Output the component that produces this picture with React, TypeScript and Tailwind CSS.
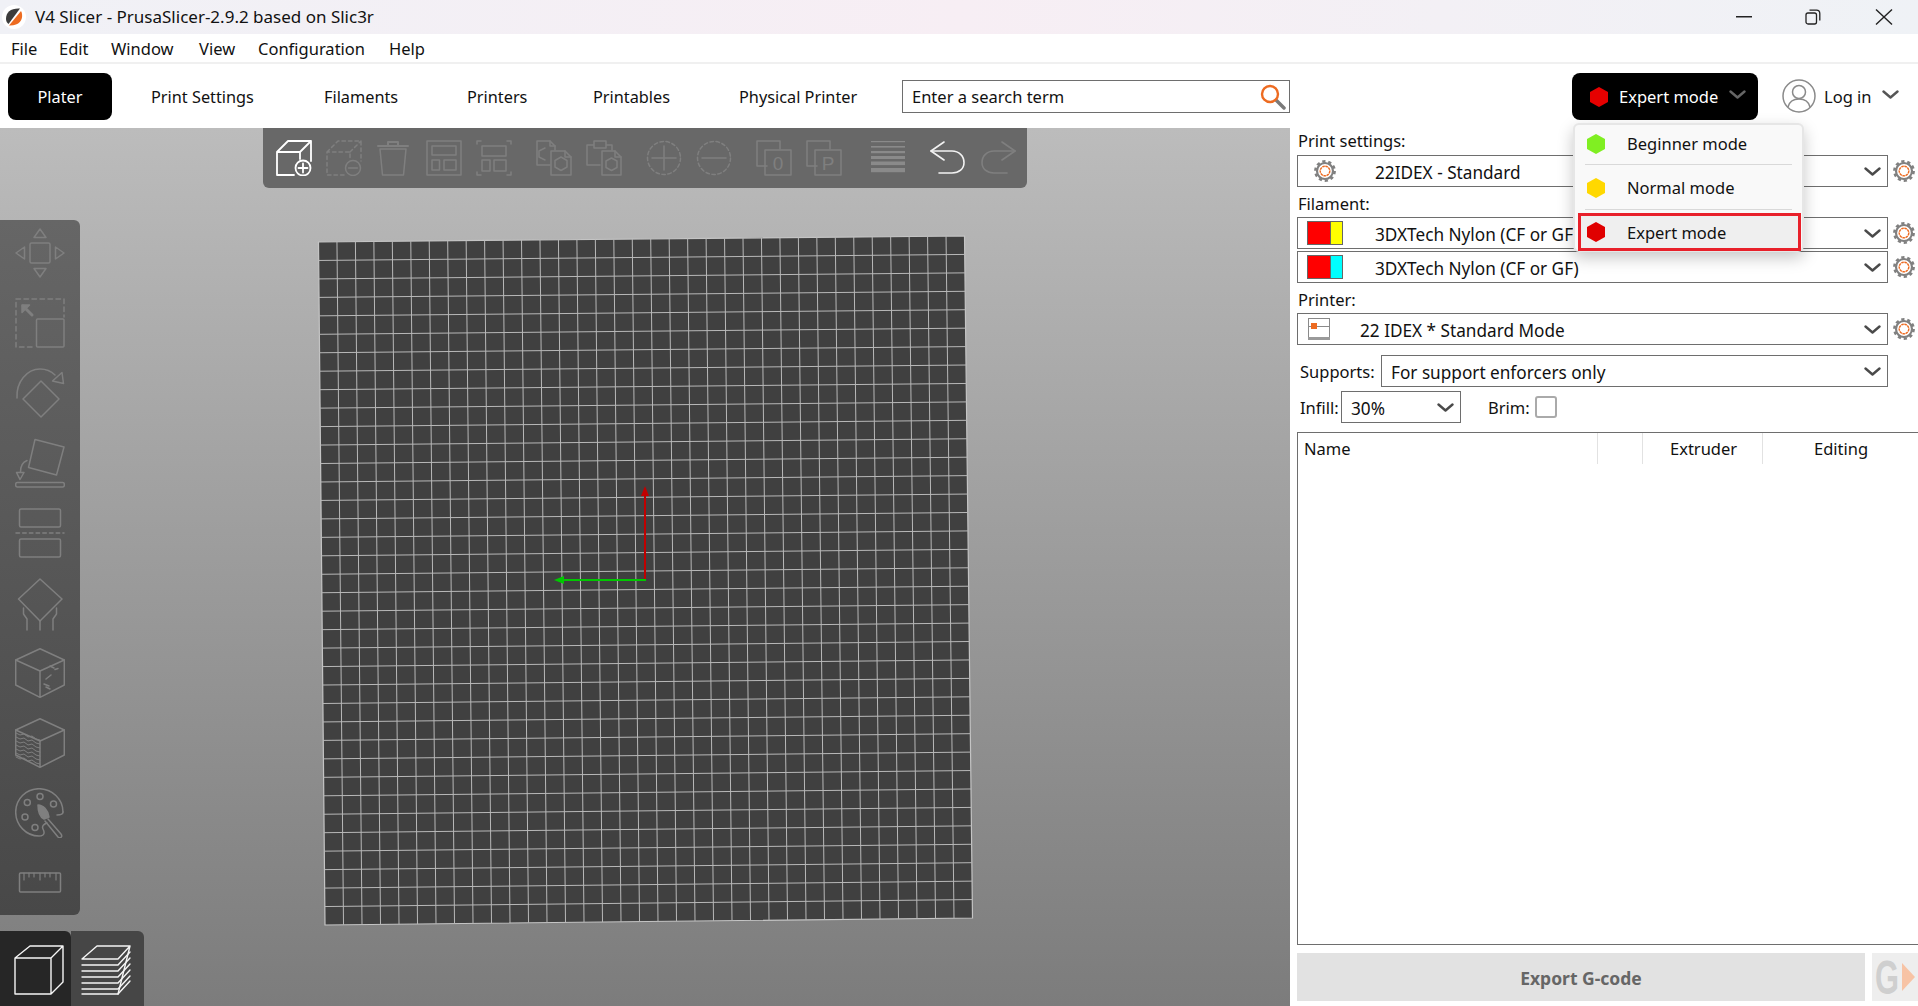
import { ReactNode } from "react";

const DIM = "#7f7f7f";

function Ic({ w = 36, h = 36, color = DIM, sw = 1.5, children }: { w?: number; h?: number; color?: string; sw?: number; children: ReactNode }) {
  return (
    <svg width={w} height={h} viewBox={`0 0 ${w} ${h}`} fill="none" stroke={color} strokeWidth={sw} strokeLinejoin="round" strokeLinecap="round" className="shrink-0">
      {children}
    </svg>
  );
}

function Hex({ color, w = 18, h = 20 }: { color: string; w?: number; h?: number }) {
  return (
    <svg width={w} height={h} viewBox="0 0 18 20" className="shrink-0">
      <polygon points="9,0 18,5 18,15 9,20 0,15 0,5" fill={color} />
    </svg>
  );
}

function Chevron({ color = "#4a4a4a", w = 17 }: { color?: string; w?: number }) {
  return (
    <svg width={w} height="9" viewBox="0 0 17 9" fill="none" stroke={color} strokeWidth="2.4" strokeLinecap="round" strokeLinejoin="round" className="shrink-0">
      <path d="M1.500 1.500l7 6 7-6" />
    </svg>
  );
}

function Gear({ size = 22 }: { size?: number }) {
  return (
    <svg width={size} height={size} viewBox="0 0 22 22" fill="none" className="shrink-0">
      <circle cx="11" cy="11" r="9.6" stroke="#808080" strokeWidth="2.6" strokeDasharray="3.2 2.83" />
      <circle cx="11" cy="11" r="8" stroke="#808080" strokeWidth="2.2" fill="#fff" />
      <circle cx="11" cy="11" r="4.8" stroke="#ed6b21" strokeWidth="1.4" strokeDasharray="2.6 0.6" />
    </svg>
  );
}

function AddCube() {
  return (
    <Ic color="#fff" sw={1.8}>
      <path d="M18 35H1V12h23v7M1 12L12 1h23v20M24 12L35 1" />
      <circle cx="27" cy="28" r="7.5" />
      <path d="M27 23.5v9M22.5 28h9" />
    </Ic>
  );
}

function DelCube() {
  return (
    <Ic>
      <path d="M18 35H1V12h23v7M1 12L12 1h23v20M24 12L35 1" strokeDasharray="3.5 3" />
      <circle cx="27" cy="28" r="7.5" />
      <path d="M22.5 28h9" />
    </Ic>
  );
}

function Trash() {
  return (
    <Ic>
      <path d="M2 6h30M12 5V2h10v3" strokeWidth="2" />
      <path d="M4 9l2.5 26h21L30 9z" />
    </Ic>
  );
}

function Arrange() {
  return (
    <Ic>
      <rect x="1" y="1" width="34" height="34" />
      <rect x="6" y="6" width="24" height="9" />
      <rect x="6" y="20" width="7.5" height="10" />
      <rect x="18" y="20" width="12" height="10" />
    </Ic>
  );
}

function ArrangeSel() {
  return (
    <Ic>
      <path d="M1 4V1h4M31 1h4v3M35 32v3h-4M5 35H1v-3" />
      <rect x="6" y="6" width="24" height="10" />
      <rect x="6" y="20" width="8" height="11" />
      <rect x="18" y="20" width="12" height="11" />
    </Ic>
  );
}

function CopyIc() {
  return (
    <Ic>
      <path d="M14 25H1V1h13l5 5v4" />
      <path d="M14 1v5h5" />
      <path d="M9 8L3 11v6l6 3" />
      <path d="M15 11h14l6 6v18H15z" />
      <path d="M29 11v6h6" />
      <polygon points="25,17 31,20.5 31,27 25,30.5 19,27 19,20.5" />
    </Ic>
  );
}

function PasteIc() {
  return (
    <Ic>
      <path d="M14 25H1V5h6M21 5h5v5M8 1h12v7H8z" />
      <path d="M16 11h13l6 6v18H16z" />
      <path d="M29 11v6h6" />
      <polygon points="25.5,18 31,21 31,27.5 25.5,30.5 20,27.5 20,21" />
    </Ic>
  );
}

function CircleOp({ plus }: { plus?: boolean }) {
  return (
    <Ic>
      <circle cx="18" cy="18" r="16.5" strokeDasharray="3.5 2.6" />
      <path d="M6 18h24" />
      {plus && <path d="M18 6v24" />}
    </Ic>
  );
}

function LetterIc({ ch }: { ch: string }) {
  return (
    <Ic>
      <path d="M11 26H1V1h23v8" />
      <rect x="9" y="10" width="26" height="25" />
      <text x="22" y="30" fontSize="19" textAnchor="middle" fill={DIM} stroke="none" fontFamily="Liberation Sans, sans-serif">{ch}</text>
    </Ic>
  );
}

function LayersBars() {
  const rows: [number, number][] = [[1, 1.2], [6, 1.6], [11, 2.2], [16, 3], [21.5, 3.6], [28, 4.2]];
  return (
    <svg width="36" height="36" viewBox="0 0 36 36" className="shrink-0">
      {rows.map(([y, h]) => (
        <rect key={y} x="1" y={y} width="34" height={h} fill="#8a8a8a" />
      ))}
    </svg>
  );
}

function Undo({ color, flip }: { color: string; flip?: boolean }) {
  return (
    <Ic color={color} sw={1.6}>
      <g transform={flip ? "translate(36 0) scale(-1 1)" : undefined}>
        <path d="M14 2L1 11l13 9" />
        <path d="M1 11h21c7 0 12 5 12 11.5S29 33 22 33H9" />
      </g>
    </Ic>
  );
}

const cubeTop = "M25 0.7L49.3 12 25 23 0.7 12z";

function MoveIc() {
  return (
    <Ic w={50} h={50}>
      <rect x="15" y="15" width="20" height="20" rx="1.5" />
      <polygon points="25,1 19,9.5 31,9.5" />
      <polygon points="25,49 19,40.5 31,40.5" />
      <polygon points="1,25 9.5,19 9.5,31" />
      <polygon points="49,25 40.5,19 40.5,31" />
    </Ic>
  );
}

function ScaleIc() {
  return (
    <Ic w={50} h={50}>
      <path d="M1 49V1h48v18M17 49H1" strokeDasharray="4.5 3.5" />
      <rect x="21.5" y="21" width="27.5" height="28" rx="1" />
      <path d="M8 8l9 9" strokeWidth="3" />
      <polygon points="7,7 14.5,7 7,14.5" fill={DIM} />
    </Ic>
  );
}

function RotateIc() {
  return (
    <Ic w={50} h={50}>
      <polygon points="26,13 44,31 26,49 8,31" />
      <path d="M2 30C1 14 12 1 25 1c6 0 11 2 15 6" />
      <polygon points="47,4.5 48.5,15.5 37.5,13" />
    </Ic>
  );
}

function PlaceIc() {
  return (
    <Ic w={50} h={50}>
      <polygon points="20,1.5 49,9 41.5,37 13.5,29.5" />
      <rect x="0.7" y="44.5" width="48.6" height="4.5" rx="1.5" />
      <path d="M12 22.5C8 24 5.5 28 5.5 34" />
      <polygon points="1.5,34.5 9,34.5 5,41.5" />
    </Ic>
  );
}

function CutIc() {
  return (
    <Ic w={50} h={50}>
      <rect x="4.5" y="1" width="41" height="18" rx="1.5" />
      <path d="M1 25h48" strokeDasharray="3.5 3.2" />
      <rect x="4.5" y="31" width="41" height="18" rx="1.5" />
    </Ic>
  );
}

function SupportIc() {
  return (
    <Ic w={50} h={53}>
      <polygon points="25,1 47,21 25,43 3.5,21" />
      <path d="M8.5 30v6l3.500 5v11M41.500 30v6l-3.500 5v11M25 43v9" />
    </Ic>
  );
}

function SeamIc() {
  return (
    <Ic w={50} h={50}>
      <path d={cubeTop} />
      <path d="M0.7 12v25L25 49.3 49.3 37V12M25 23v26.3" />
      <path d="M35 18l4 2M40 21.5l3-1M36 27l-5 4M29 36l5 2M31 39l4 2" />
    </Ic>
  );
}

function FdmIc() {
  const ys = [15, 19, 23, 27, 31, 35, 39];
  return (
    <Ic w={50} h={50}>
      <path d={cubeTop} />
      <path d="M0.7 12v25L25 49.3 49.3 37V12M25 23v26.3" />
      {ys.map((y) => (
        <path key={y} d={`M1 ${y}l4 2 4-1 4 3 4-1 4 3 4 1`} strokeWidth="1" />
      ))}
    </Ic>
  );
}

function PaintIc() {
  return (
    <Ic w={50} h={50}>
      <path d="M48 24C48 11 37 0.7 24 0.7S0.7 11 0.7 24 11 48 24 48c7 0 5-5 4-7-1.500-3 1-5 4-6" />
      <path d="M42 27c3 0 6 0 6-3" />
      <circle cx="25" cy="8.500" r="3" />
      <circle cx="12.300" cy="14.500" r="3" />
      <circle cx="38.500" cy="16" r="3" />
      <circle cx="10" cy="29" r="3" />
      <circle cx="20" cy="39.500" r="3" />
      <path d="M23 17c5 0 10 5 11 12l-5 2c-4-2-6-8-6-14z" fill={DIM} />
      <path d="M33 31l13 15c2 3-1 5-3 3L30 33" />
    </Ic>
  );
}

function MeasureIc() {
  const xs = [9, 14, 19, 25, 30, 35, 41];
  return (
    <Ic w={50} h={50}>
      <rect x="4.500" y="15" width="41" height="19" rx="1" />
      {xs.map((x, i) => (
        <path key={x} d={`M${x} 15v${i % 3 === 0 ? 7 : 4}`} strokeWidth="1.2" />
      ))}
    </Ic>
  );
}

function Plate() {
  const tl = [318.5, 114];
  const tr = [964.5, 108];
  const br = [972.5, 790];
  const bl = [325, 797];
  const cols = 35;
  const rows = 37;
  const mix = (a: number[], b: number[], t: number) => [a[0] + (b[0] - a[0]) * t, a[1] + (b[1] - a[1]) * t];
  const lines: ReactNode[] = [];
  for (let i = 1; i < cols; i++) {
    const p = mix(tl, tr, i / cols);
    const q = mix(bl, br, i / cols);
    lines.push(<line key={"c" + i} x1={p[0]} y1={p[1]} x2={q[0]} y2={q[1]} />);
  }
  for (let i = 1; i < rows; i++) {
    const p = mix(tl, bl, i / rows);
    const q = mix(tr, br, i / rows);
    lines.push(<line key={"r" + i} x1={p[0]} y1={p[1]} x2={q[0]} y2={q[1]} />);
  }
  return (
    <svg width="1290" height="878" viewBox="0 0 1290 878" className="absolute left-0 top-0">
      <polygon points={`${tl} ${tr} ${br} ${bl}`} fill="#404040" stroke="#c4c4c4" strokeWidth="1.2" />
      <g stroke="#b8b8b8" strokeWidth="1">{lines}</g>
      <line x1="645" y1="362" x2="645" y2="452" stroke="#c00000" strokeWidth="2" />
      <polygon points="645,358 641,368 649,368" fill="#c00000" />
      <line x1="560" y1="452" x2="646" y2="452" stroke="#00c800" strokeWidth="2" />
      <polygon points="554,452 564,448 564,456" fill="#00c800" />
    </svg>
  );
}

function Combo({ w = "w-[591px]", left, text, textClass = "ml-[39px]" }: { w?: string; left?: ReactNode; text: string; textClass?: string }) {
  return (
    <div className={`${w} h-[32px] border border-[#6e6e6e] flex items-center pr-[6px] shrink-0 bg-white relative`}>
      {left}
      <span className={`${textClass} pt-[3px] text-[17.200px] whitespace-nowrap`}>{text}</span>
      <span className="ml-auto"><Chevron /></span>
    </div>
  );
}

function Swatch({ color }: { color: string }) {
  return (
    <div className="ml-[9px] w-[36px] h-[24px] border border-[#666] flex shrink-0">
      <div className="w-[23px] bg-[#ff0000] border-r border-[#666]" />
      <div className="flex-1" style={{ background: color }} />
    </div>
  );
}

function PrinterIc() {
  return (
    <svg width="22" height="22" viewBox="0 0 22 22" className="ml-[10px] shrink-0">
      <rect x="0.5" y="0.5" width="21" height="21" fill="#fff" stroke="#8a8a8a" />
      <rect x="0" y="19" width="22" height="3" fill="#9a9a9a" />
      <line x1="1" y1="8.500" x2="21" y2="8.500" stroke="#8a8a8a" />
      <rect x="3" y="5" width="6" height="6" fill="#ed6b21" />
    </svg>
  );
}

function MenuRow({ color, label, h }: { color: string; label: string; h: string }) {
  return (
    <div className={`${h} flex items-center pl-[12px]`}>
      <Hex color={color} />
      <span className="ml-[22px] pt-[2px]">{label}</span>
    </div>
  );
}

export default function App() {
  return (
    <div className="h-screen w-full flex flex-col overflow-hidden bg-white text-[16.500px] text-[#111] font-['Noto_Sans',sans-serif]">
      {/* title bar */}
      <div className="h-[34px] shrink-0 flex items-center bg-gradient-to-r from-[#f0f1f6] via-[#f7eef4] to-[#eff2f6]">
        <svg width="24" height="24" viewBox="0 0 24 24" className="ml-[2px] shrink-0">
          <circle cx="12" cy="12" r="12" fill="#fff" />
          <path d="M4 14C4 7 9 3 18 3.500L6.500 19C5 18 4 16 4 14z" fill="#3c3c3c" />
          <path d="M20 9c1 6-3 12-13 11.500L19 6c.5 1 1 2 1 3z" fill="#ed6b21" />
        </svg>
        <span className="ml-[9px] text-[17px]">V4 Slicer - PrusaSlicer-2.9.2 based on Slic3r</span>
        <div className="ml-auto flex items-center">
          <svg width="16" height="2" className="mr-[53px]"><rect width="16" height="1.500" fill="#222" /></svg>
          <svg width="16" height="16" viewBox="0 0 16 16" fill="none" stroke="#222" strokeWidth="1.300" className="mr-[54px]">
            <rect x="1" y="4" width="10.500" height="11" rx="2" />
            <path d="M4.500 1.200h7c2 0 3.300 1.300 3.300 3.300v7" />
          </svg>
          <svg width="18" height="16" viewBox="0 0 18 16" fill="none" stroke="#222" strokeWidth="1.400" className="mr-[25px]">
            <path d="M1 0.500l16 15M17 0.500L1 15.500" />
          </svg>
        </div>
      </div>

      {/* menu bar */}
      <div className="h-[30px] shrink-0 flex items-center pl-[11px] pt-[3px] border-b-2 border-[#f0f0f0]">
        <span className="w-[48px]">File</span>
        <span className="w-[52px]">Edit</span>
        <span className="w-[88px]">Window</span>
        <span className="w-[59px]">View</span>
        <span className="w-[131px]">Configuration</span>
        <span>Help</span>
      </div>

      {/* tab bar */}
      <div className="h-[64px] shrink-0 flex items-center pl-[8px] pt-[1px] text-[16.300px]">
        <div className="h-[47px] w-[104px] mr-[39px] pt-[2px] flex items-center justify-center bg-black text-white rounded-lg">Plater</div>
        <div className="h-[47px] w-[173px] pt-[2px] flex items-center">Print Settings</div>
        <div className="h-[47px] w-[143px] pt-[2px] flex items-center">Filaments</div>
        <div className="h-[47px] w-[126px] pt-[2px] flex items-center">Printers</div>
        <div className="h-[47px] w-[146px] pt-[2px] flex items-center">Printables</div>
        <div className="h-[47px] pt-[2px] flex items-center">Physical Printer</div>
        <div className="absolute left-[902px] top-[80px] w-[388px] h-[33px] border border-[#6e6e6e] flex items-center pl-[9px] pr-[3px] text-[16.500px]">
          <span className="pt-[2px]">Enter a search term</span>
          <svg width="26" height="26" viewBox="0 0 26 26" fill="none" className="ml-auto">
            <line x1="14" y1="14" x2="24" y2="24" stroke="#7a7a7a" strokeWidth="3.500" strokeLinecap="round" />
            <circle cx="10" cy="10" r="8" stroke="#ed6b21" strokeWidth="2.400" fill="#fff" />
          </svg>
        </div>
        <div className="absolute left-[1572px] top-[73px] w-[186px] h-[47px] bg-black text-white rounded-lg flex items-center pl-[18px] text-[16.500px]">
          <Hex color="#e60000" />
          <span className="ml-[11px] pt-[2px]">Expert mode</span>
          <span className="ml-[11px] mb-[4px]"><Chevron color="#666" /></span>
          {/* mode menu */}
          <div className="absolute left-[1px] top-[50px] w-[231px] h-[129px] bg-[#f9f9f9] text-[#111] border-2 border-[#e6e6e6] rounded-md shadow-[0_6px_16px_rgba(0,0,0,0.22)] z-20">
            <MenuRow color="#80ef22" label="Beginner mode" h="h-[39px] pb-[2px]" />
            <div className="mx-[10px] h-px bg-[#d9d9d9]" />
            <MenuRow color="#ffd800" label="Normal mode" h="h-[44px] pt-[1px]" />
            <div className="mx-[10px] h-px bg-[#d9d9d9]" />
            <div className="absolute left-[3px] top-[88px] w-[223px] h-[38px] border-[3px] border-[#e8202a] bg-[#efefef] flex items-center pl-[6px]">
              <Hex color="#e00000" />
              <span className="ml-[22px] pt-[3px]">Expert mode</span>
            </div>
          </div>
        </div>
        <div className="absolute left-[1782px] top-[79px] flex items-center h-[34px] text-[16.500px]">
          <svg width="34" height="34" viewBox="0 0 34 34" fill="none" stroke="#8a8a8a" strokeWidth="1.500">
            <circle cx="17" cy="17" r="16" />
            <circle cx="17" cy="13" r="6.500" />
            <path d="M6 28c1.500-6 6-8 11-8s9.500 2 11 8" />
          </svg>
          <span className="ml-[8px] pt-[2px]">Log in</span>
          <span className="ml-[10px] mb-[3px]"><Chevron color="#555" /></span>
        </div>
      </div>

      <div className="flex-1 flex min-h-0">
        {/* 3d view */}
        <div className="w-[1290px] shrink-0 relative bg-gradient-to-b from-[#bcbcbc] to-[#7c7c7c] overflow-hidden">
          <Plate />
          <div className="absolute left-[263px] top-0 w-[764px] h-[60px] bg-[#686868] rounded-b-md flex items-center pl-[13px] gap-[14px]">
            <AddCube />
            <DelCube />
            <Trash />
            <Arrange />
            <ArrangeSel />
            <div className="ml-[10px]"><CopyIc /></div>
            <PasteIc />
            <div className="ml-[10px]"><CircleOp plus /></div>
            <CircleOp />
            <div className="ml-[10px]"><LetterIc ch="0" /></div>
            <LetterIc ch="P" />
            <div className="ml-[14px]"><LayersBars /></div>
            <div className="ml-[10px]"><Undo color="#f2f2f2" /></div>
            <Undo color={DIM} flip />
          </div>

          <div className="absolute left-0 top-[92px] w-[80px] h-[695px] rounded-r-md bg-gradient-to-b from-[#666666] to-[#484848] flex flex-col items-center pt-[8px] gap-[20px]">
            <MoveIc />
            <ScaleIc />
            <RotateIc />
            <PlaceIc />
            <CutIc />
            <div className="h-[50px]"><SupportIc /></div>
            <SeamIc />
            <FdmIc />
            <PaintIc />
            <MeasureIc />
          </div>

          <div className="absolute left-0 bottom-0 h-[75px] flex">
            <div className="w-[71px] bg-[#262626] rounded-tr-md pl-[14px] pt-[14px]">
              <Ic w={50} h={50} color="#f5f5f5" sw={1.4}>
                <path d="M1 13h36v36H1zM1 13L16 1h33L37 13M49 1v36L37 49" />
              </Ic>
            </div>
            <div className="w-[73px] bg-[#464646] rounded-tr-md pl-[10px] pt-[14px]">
              <Ic w={50} h={50} color="#f5f5f5" sw={1.4}>
                <path d="M1 14L16 1h33L37 14zM49 1L37 49M1 14h36" />
                {[20, 26, 32, 38, 44, 49].map((y) => (
                  <path key={y} d={`M1 ${y}h36l12-13`} />
                ))}
              </Ic>
            </div>
          </div>
        </div>

        {/* sidebar */}
        <div className="flex-1 min-w-0 flex flex-col pl-[7px]">
          <div className="h-[27px] pl-[1px] flex items-center shrink-0">Print settings:</div>
          <div className="flex items-center">
            <Combo left={<span className="ml-[16px]"><Gear /></span>} text="22IDEX - Standard" textClass="ml-[39px]" />
            <span className="ml-[5px]"><Gear /></span>
          </div>
          <div className="h-[30px] pl-[1px] pt-[4px] flex items-center shrink-0">Filament:</div>
          <div className="flex items-center">
            <Combo left={<Swatch color="#ffff00" />} text="3DXTech Nylon (CF or GF)" textClass="ml-[32px]" />
            <span className="ml-[5px]"><Gear /></span>
          </div>
          <div className="flex items-center mt-[2px]">
            <Combo left={<Swatch color="#00ffff" />} text="3DXTech Nylon (CF or GF)" textClass="ml-[32px]" />
            <span className="ml-[5px]"><Gear /></span>
          </div>
          <div className="h-[30px] pl-[1px] pt-[4px] flex items-center shrink-0">Printer:</div>
          <div className="flex items-center">
            <Combo left={<PrinterIc />} text="22 IDEX * Standard Mode" textClass="ml-[30px]" />
            <span className="ml-[5px]"><Gear /></span>
          </div>
          <div className="flex items-center mt-[10px] pl-[3px]">
            <span className="w-[81px] pt-[2px]">Supports:</span>
            <Combo w="w-[507px]" text="For support enforcers only" textClass="ml-[9px]" />
          </div>
          <div className="flex items-center mt-[4px] pl-[3px]">
            <span className="w-[41px] pt-[2px]">Infill:</span>
            <Combo w="w-[120px]" text="30%" textClass="ml-[9px]" />
            <span className="ml-[27px] pt-[2px]">Brim:</span>
            <span className="ml-[5px] w-[22px] h-[22px] border-2 border-[#aaa] rounded-[3px]" />
          </div>

          <div className="mt-[9px] flex-1 min-h-0 border-l border-t border-b border-[#6e6e6e]">
            <div className="h-[31px] pt-[2px] flex items-center relative">
              <span className="ml-[6px]">Name</span>
              <span className="absolute left-[299px] top-0 h-full border-l border-[#e2e2e2]" />
              <span className="absolute left-[344px] top-0 h-full border-l border-[#e2e2e2]" />
              <span className="absolute left-[464px] top-0 h-full border-l border-[#e2e2e2]" />
              <span className="absolute left-[372px]">Extruder</span>
              <span className="absolute left-[516px]">Editing</span>
            </div>
          </div>

          <div className="mt-[8px] mb-[5px] flex shrink-0 h-[48px]">
            <div className="w-[568px] pt-[2px] bg-[#e2e2e2] flex items-center justify-center font-bold text-[17.500px] text-[#666]">Export G-code</div>
            <div className="ml-[7px] flex-1 bg-[#eeeeee] flex items-center">
              <svg width="46" height="48" viewBox="0 0 46 48" className="shrink-0 overflow-visible">
                <text x="3" y="41" fontSize="48" fontWeight="700" fill="#cfcfcf" textLength="24" lengthAdjust="spacingAndGlyphs" fontFamily="Liberation Sans, sans-serif">G</text>
                <polygon points="30,10 43,24 30,38" fill="#f7c3a5" />
              </svg>
            </div>
          </div>
        </div>
      </div>
    </div>
  );
}
